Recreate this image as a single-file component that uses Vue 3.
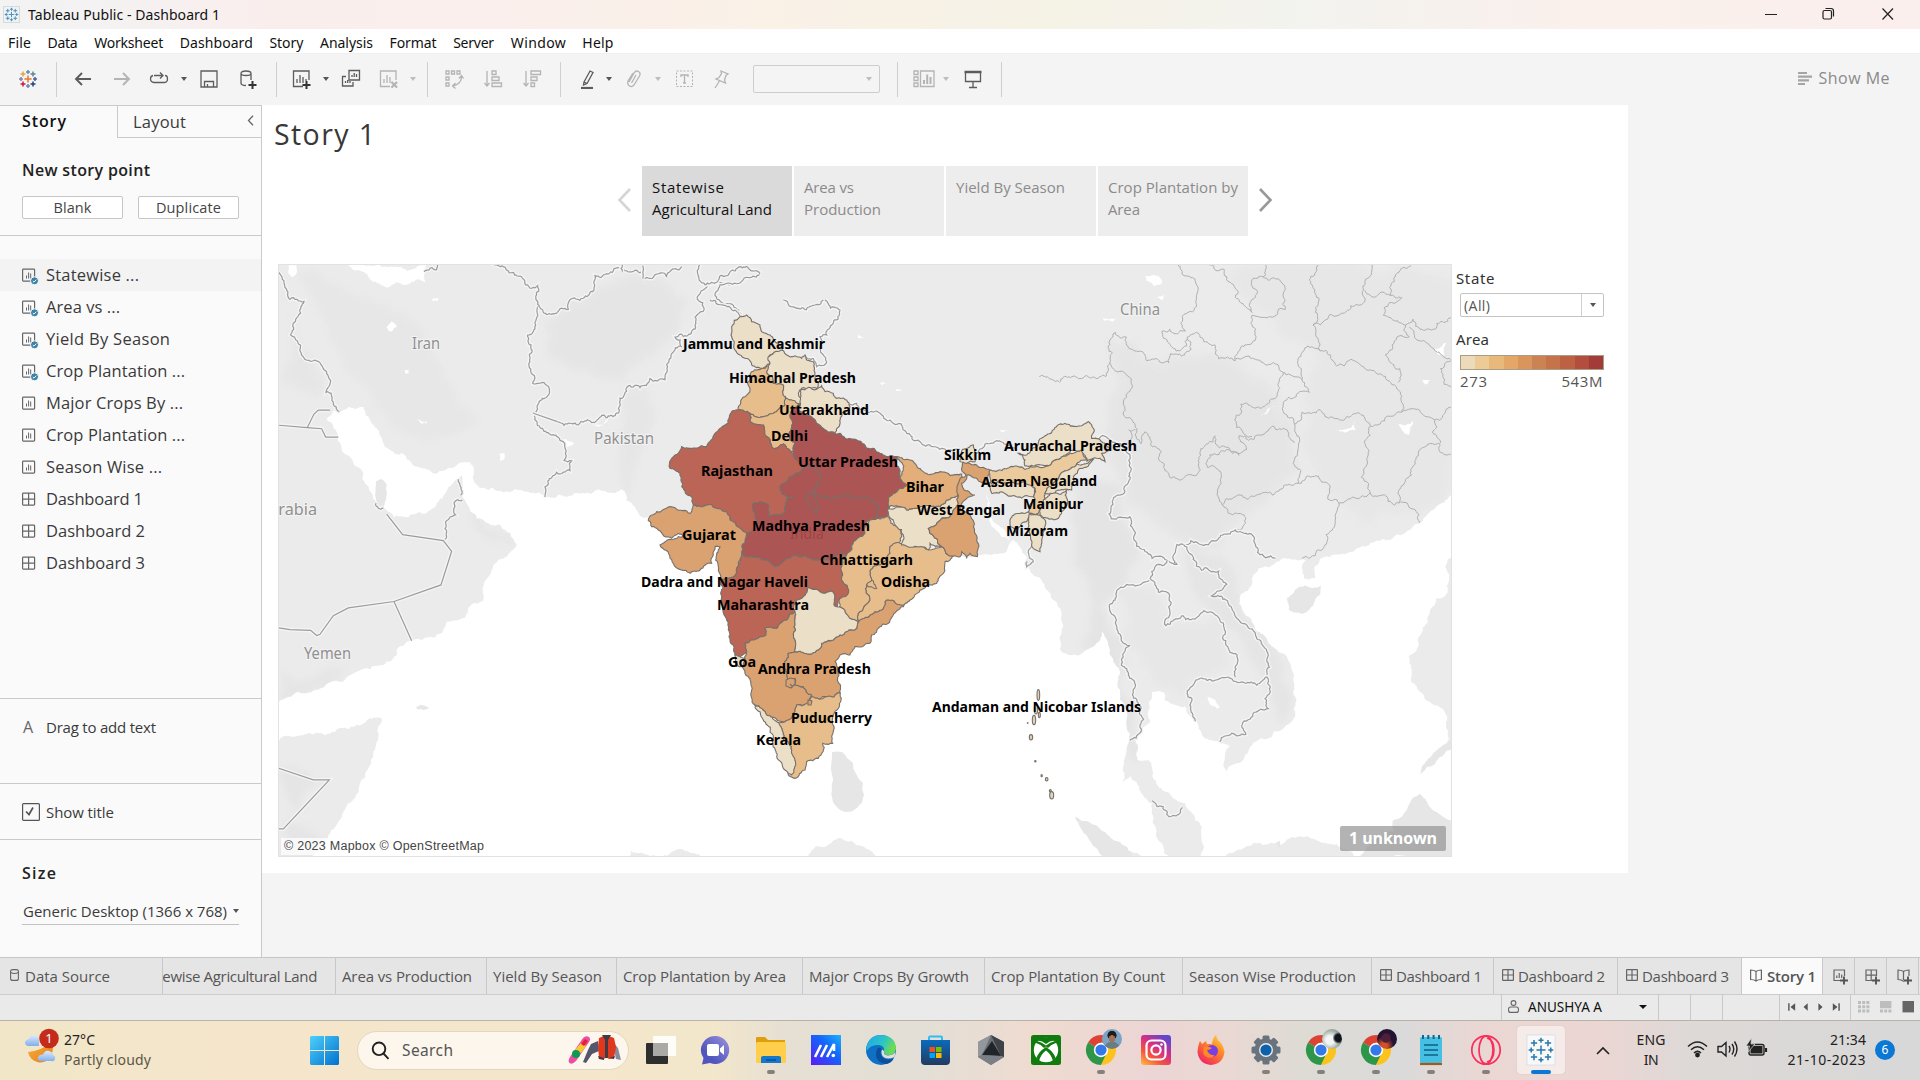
<script setup>
// Stretches or tightens letter spacing so a label takes a given width.
const vFit = {
  mounted(el, { value }) {
    const n = el.textContent.length
    const w = el.getBoundingClientRect().width
    el.style.letterSpacing = ((value - w) / Math.max(1, n - 1)).toFixed(3) + 'px'
  },
}

const menus = [
  ['File', 8, 23], ['Data', 48, 30], ['Worksheet', 95, 69], ['Dashboard', 180, 73], ['Story', 269, 34],
  ['Analysis', 319, 53], ['Format', 388, 47], ['Server', 451, 41], ['Window', 508, 55], ['Help', 580, 31],
]

// name, horizontal centre, width
const toolSpec = [
  ['logo', 27.5, 20], ['sep', 56.5, 1], ['back', 83, 20], ['fwd', 122, 20], ['redo', 159, 20], ['caret', 183.5, 8],
  ['save', 209, 20], ['db', 248, 20], ['sep', 276.5, 1], ['sheet', 301.5, 20], ['caret', 325.5, 8], ['dup', 350.5, 20],
  ['clear', 389, 20], ['caretoff', 412.5, 8], ['sep', 427.5, 1], ['swap', 453.5, 20], ['asc', 493, 20], ['desc', 532, 20],
  ['sep', 560.5, 1], ['pen', 587, 20], ['caret', 608.5, 8], ['clip', 633.5, 20], ['caretoff', 657.5, 8], ['text', 685, 20],
  ['pin', 721, 20], ['select', 816.5, 127], ['sep', 897.5, 1], ['cards', 924, 22], ['caretoff', 945.5, 8],
  ['present', 973, 20], ['sep', 1001.5, 1],
]
let edge = 0
const tools = toolSpec.map(([name, c, w]) => {
  const left = c - w / 2
  const t = { name, w, gap: left - edge }
  edge = left + w
  return t
})

const glyphs = {
  back: 'M18 10H3M9 4L3 10L9 16', fwd: 'M2 10H17M11 4L17 10L11 16',
  redo: 'M4 6.5Q1.5 7 1.5 10T5 13.5H15Q18.5 13.5 18.5 10T16 6.5M5 6.5H14M11 3.5L14 6.5L11 9.5',
  save: 'M2 2H18V18H2ZM5.5 18V12.5H14.5V18M8.5 18V15',
  db: 'M3 4.5Q3 2 8 2T13 4.5Q13 6.5 8 6.5T3 4.5ZM3 4.500V14Q3 16.500 8 16.500M13 4.500V11',
  sheet: 'M11 17.500H1.500V2H17V11M5 14V10M8 14V6M11 14V8M14 12V10',
  dup: 'M8 1.500H18.500V11H8ZM5 7.500H1.500V17H12V13M11 8V6M13.200 8V4M15.500 8V5M4.500 14V12M6.700 14V11M9 14V12',
  clear: 'M11 17.500H1.500V2H17V11M5 14V10M8 14V6M11 14V8M12.500 13L18 18.500M18 13L12.500 18.500',
  swap: 'M2 2H5V5H2ZM7.500 2H10.500V5H7.500ZM13 2H16V5H13ZM2 8H5V11H2ZM2 14H5V17H2ZM17.500 7Q18 15 9 17M11.500 14L8.500 17L11.500 19.500M15 9.500L17.500 6.500L19.500 9.500',
  asc: 'M4 2V17M1.500 14L4 17L6.500 14M9 2H13V5.500H9ZM9 8H16V11.500H9ZM9 14H18.500V17.500H9Z',
  desc: 'M4 2V17M1.500 14L4 17L6.500 14M9 2H18.500V5.500H9ZM9 8H15V11.500H9ZM9 14H12.500V17.500H9Z',
  pen: 'M7 13L13 2L16 3.500L10 14.500L6.500 16ZM7 13L10 14.500',
  clip: 'M5 13L10 4Q12 1 14.500 2.500T15.500 7L10 16Q8 18.500 5.500 17T4 12L9 4M7.500 14L12 6',
  pin: 'M10 2L17 5L15 6.500L13.500 11L14.500 14L5 10L8 8.500L10.500 4.500ZM8.500 12L4 19',
  cards: 'M1 2H5V5.500H1ZM1 8H5V11.500H1ZM1 14H5V17.500H1ZM7.500 2H21V17.500H7.500Z',
  present: 'M2.500 3V12.500H17.500V3M10 12.500V18M6 18.500H14',
}
const dim = ['fwd', 'clear', 'swap', 'asc', 'desc', 'clip', 'pin', 'cards']

const points = [
  ['Statewise ...', 93, 'done'], ['Area vs ...', 74, 'done'], ['Yield By Season', 124, 'done'],
  ['Crop Plantation ...', 139, 'done'], ['Major Crops By ...', 137, 'sheet'], ['Crop Plantation ...', 139, 'sheet'],
  ['Season Wise ...', 116, 'sheet'], ['Dashboard 1', 97, 'dash'], ['Dashboard 2', 99, 'dash'], ['Dashboard 3', 99, 'dash'],
]
const nav = [
  [['Statewise', 72], ['Agricultural Land', 120]],
  [['Area vs', 50], ['Production', 77]],
  [['Yield By Season', 109]],
  [['Crop Plantation by', 130], ['Area', 32]],
]
const ramp = ['#ecdabb', '#eccb97', '#e9b97c', '#e4a768', '#d9955c', '#cc8353', '#c5734b', '#bd6143', '#b14e3e', '#a33b39']

// label, tab width, text width, icon
const tabs = [
  ['Area vs Production', 151, 130], ['Yield By Season', 130, 109], ['Crop Plantation by Area', 186, 163],
  ['Major Crops By Growth', 182, 160], ['Crop Plantation By Count', 198, 174], ['Season Wise Production', 189, 167],
  ['Dashboard 1', 122, 86, 'dash'], ['Dashboard 2', 124, 87, 'dash'], ['Dashboard 3', 124, 87, 'dash'],
]
const sparks = [
  [10, 10, 3.6], [10, 3, 2], [10, 17, 2], [3, 10, 2], [17, 10, 2], [5, 5, 2.5], [15, 5, 2.5], [5, 15, 2.5], [15, 15, 2.5],
]
const sparkHues = ['#e8762b', '#5f8fad', '#6d87b5', '#7b85b8', '#555f9b', '#e9a13f', '#5b879b', '#c72037', '#1f457e']

/* ---------- map geometry ---------- */
const parse = (s) => s.trim().split(/\s+/).map((p) => p.split(',').map(Number))
const noise = (a, b, c, d) => {
  const v = Math.sin((a + c) * 12.9898 + (b + d) * 78.233) * 43758.5453
  return (v - Math.floor(v)) * 2 - 1
}
// Midpoint displacement; symmetric in its end points so shared borders coincide.
function split(p, q, amp, out) {
  const len = Math.hypot(q[0] - p[0], q[1] - p[1])
  if (len < 7) { out.push(q); return }
  const flip = p[0] > q[0] || (p[0] === q[0] && p[1] > q[1])
  const k = noise(p[0], p[1], q[0], q[1]) * amp * len * (flip ? -1 : 1)
  const m = [(p[0] + q[0]) / 2 - ((q[1] - p[1]) / len) * k, (p[1] + q[1]) / 2 + ((q[0] - p[0]) / len) * k]
  split(p, m, amp, out)
  split(m, q, amp, out)
}
function rough(s, closed, amp = 0.13) {
  const pts = parse(s)
  const out = [pts[0]]
  for (let i = 1; i < pts.length; i++) split(pts[i - 1], pts[i], amp, out)
  if (closed) split(pts[pts.length - 1], pts[0], amp, out)
  return 'M' + out.map((p) => p[0].toFixed(1) + ' ' + p[1].toFixed(1)).join('L') + (closed ? 'Z' : '')
}
const W = 'translate(270 250) scale(.33333 .39541)'
const E = 'translate(1080 250) scale(.3699 .39541)'
const B = 'translate(880 400) scale(.33333)'
const S = 'translate(640 300) scale(.33333)'

const shade = [
  [W, '300,120 420,180 520,300 560,380 640,420 560,460 440,470 360,440 280,340 200,250 150,150 60,60 200,90', '#e6e6e6'],
  [W, '820,180 1000,90 1180,80 1260,130 1200,230 1060,330 900,300 830,260', '#e4e4e4'],
  [W, '580,650 640,700 720,720 735,745 700,740 640,720', '#e4e4e4'],
  [W, '27,1310 130,1340 178,1345 60,1450 175,1500 100,1535 27,1535', '#e3e3e3'],
  [W, '27,1060 140,1080 240,1050 200,1090 140,1108 27,1140', '#e4e4e4'],
  [W, '1050,380 1130,350 1160,420 1110,520 1080,620 1050,560', '#e5e5e5'],
  [W, '27,100 90,250 160,320 150,370 27,330', '#e5e5e5'],
  [E, '60,220 400,280 560,420 600,560 420,700 300,760 120,640 60,480', '#e4e4e4'],
  [E, '400,60 1005,80 1005,600 760,700 600,500 640,260', '#e6e6e6'],
  [E, '0,560 130,600 160,760 120,860 60,900 100,1100 150,1300 100,1200 60,1000 0,1020', '#e2e2e2'],
  [E, '270,760 420,820 430,900 540,1030 575,1140 540,1200 500,1100 420,960 340,900', '#e3e3e3'],
  [E, '110,860 200,860 240,950 380,930 400,1060 300,1080 280,1140 200,1100 130,1000', '#e6e6e6'],
]
const water = [
  [W, '190,405 205,415 240,397 280,397 300,430 330,470 350,500 400,515 430,545 475,555 500,565 520,558 565,540 600,537 612,555 615,590 650,605 720,612 830,625 900,622 960,617 1030,615 1055,605 1070,635 1095,650 1110,672 1160,668 1250,668 1440,665 1440,1568 90,1568 130,1530 175,1480 215,1435 235,1400 270,1350 295,1310 310,1270 325,1240 330,1200 335,1185 310,1182 260,1200 200,1212 130,1225 80,1230 20,1245 20,1145 70,1125 140,1112 175,1095 220,1092 240,1075 300,1060 350,1040 380,1025 385,1005 420,988 470,980 510,970 530,940 585,930 595,905 640,885 642,840 665,810 700,780 720,765 740,745 720,715 690,695 655,690 620,680 600,660 582,630 577,610 577,570 560,580 530,610 500,640 470,665 430,668 370,675 345,655 320,640 300,610 285,590 278,560 250,540 215,505 200,460 170,430 185,415'],
  [W, '230,30 290,60 310,80 360,92 410,88 468,80 465,50 470,30'],
  [W, '52,38 80,38 82,55 66,68 55,58'], [W, '348,195 364,181 380,195 364,206'], [W, '487,124 505,120 505,129 487,129'],
  [W, '687,515 704,515 703,530 690,534'], [W, '404,303 416,302 416,312 406,314'], [W, '880,478 912,488 890,498'], [W, '970,442 1015,428 990,446'], [W, '440,428 470,434 470,440'],
  [B, '-390,600 190,490 250,470 300,465 350,462 380,455 400,420 420,440 440,470 440,500 470,530 500,570 520,600 545,640 550,680 540,720 540,745 570,765 600,765 640,740 665,695 680,720 700,780 715,840 720,870 735,920 740,980 745,1030 735,1070 730,1140 730,1400 -400,1400'],
  [E, '118,1345 135,1330 160,1365 195,1400 205,1460 220,1500 245,1545 -20,1545 -20,1300'],
  [E, '1010,620 960,655 920,690 870,720 800,735 770,750 700,770 650,780 635,800 635,830 605,830 600,800 610,785 570,782 530,790 500,800 470,820 465,845 435,870 430,895 460,930 480,965 510,995 545,1020 570,1050 580,1100 585,1140 578,1185 550,1210 510,1235 470,1245 455,1270 420,1300 395,1318 392,1280 405,1255 375,1245 350,1240 320,1210 300,1180 285,1155 230,1140 225,1118 195,1118 187,1150 190,1190 170,1210 150,1240 155,1290 185,1290 195,1330 215,1360 260,1390 300,1420 330,1460 335,1510 330,1568 1010,1568'],
  [E, '175,65 215,68 222,82 200,92 180,78'], [E, '208,120 228,110 222,128'], [E, '62,172 98,172 90,181 64,178'],
  [E, '692,455 735,448 742,432 745,455 715,462'], [E, '862,440 900,432 888,468 870,455'], [E, '925,330 948,330 935,340'],
  [E, '958,248 990,235 985,265 965,262'], [E, '345,1130 378,1155 370,1160 348,1142'], [E, '488,418 530,392 505,414'],
  [S, '655,105 672,112 655,115'], [S, '720,248 740,250 725,255'], [S, '768,268 788,270 770,274'],
  [B, '355,85 385,92 365,96'], [B, '318,280 332,370 400,440 360,380 326,340'],
]
const isles = [
  [W, '318,585 332,580 348,590 350,620 340,650 325,645 315,620'], [W, '438,1155 460,1152 482,1158 460,1164 442,1162'],
  ['', '832,752 842,752 853,763 863,783 864,795 857,808 845,812 835,805 832,790 831,770'],
  [E, '558,880 580,860 610,848 652,850 650,870 630,900 600,920 565,910'],
  [E, '745,1540 790,1490 850,1470 845,1445 880,1420 900,1385 920,1375 940,1400 960,1420 985,1435 1010,1445 1010,1545'],
  [E, '920,1325 925,1305 950,1280 1010,1240 1010,1260 960,1300'],
  [E, '-14,1432 20,1445 60,1470 90,1492 125,1508 142,1545 72,1545 40,1510 10,1475'],
  [E, '530,1498 540,1494 543,1508 535,1513'],
]
const borders = [
  [W, '24,55 45,95 60,125 102,130 92,160 70,185 62,215 90,255 130,280 155,292 175,320 168,360 183,362 190,385 208,408'],
  [W, '665,36 700,42 740,65 767,88 803,90 808,142 797,190 773,215 783,240 778,265 788,337 832,343 832,370 790,413'],
  [W, '862,434 945,432 1047,410 1050,375 1070,348 1110,348 1140,325 1185,328 1190,290 1205,262 1235,245 1215,220 1250,218 1275,200 1275,170 1300,155 1282,118 1305,98 1350,82 1400,85 1440,70 1470,55'],
  [W, '790,413 830,462 880,485 882,532 905,533 900,558 860,562 838,578 825,625'],
  [W, '808,142 860,160 895,150 897,130 940,122 968,105 975,65 1010,60 1040,45 1080,55 1120,55 1125,72 1165,60 1190,68 1235,42'],
  [W, '1290,36 1292,80 1320,85 1380,55 1440,50 1470,60'], [W, '1400,85 1350,88 1340,125 1390,140 1415,170'],
  [W, '462,55 500,50 505,36'], [W, '1118,72 1118,40'], [W, '1057,38 1057,55'],
  [W, '520,735 525,705 540,675 557,670 552,640 577,632'], [W, '565,580 573,600 572,620'], [W, '318,640 325,653 340,653'],
  [S, '210,0 260,20 300,48'], [S, '430,0 470,25 525,15 550,0'], [S, '555,0 600,30 575,75 560,105 540,110 540,145 560,185 530,200 495,168'],
  [S, '625,315 650,310 720,340 760,370 785,375 800,400 840,425 880,440 960,448'],
  [B, '290,160 320,130 350,122 380,132 410,150'], [B, '460,420 460,485 440,500 442,485'],
  [E, '40,475 80,480 110,490 125,510 135,540 130,590 90,630 85,680 135,675 150,715 163,755 195,780 235,785 262,795 262,745 300,735 360,735 420,708 470,725 480,765 528,780'],
  [E, '235,785 190,830 150,850 105,857 95,885 80,910 100,955 135,1000 112,1050 150,1100 165,1160 172,1187 135,1240'],
  [E, '190,830 212,865 240,868 243,915 232,950 275,925 300,935 335,912 375,930 390,960 395,1000 425,1025 420,1080'],
  [E, '280,745 305,775 315,800 375,812 397,845 355,875 410,905 440,945 480,985 505,1015 512,1055 505,1080'],
  [E, '312,1192 300,1165 290,1115 325,1083 400,1080 445,1095 505,1080 512,1110 510,1160 440,1195 448,1225 410,1222 378,1243'],
  [E, '195,1393 225,1408 240,1433 270,1425 277,1410'],
]
const straight = [
  'M24 443L112 449L155 452L167 473H205', 'M112 449L132 415L145 405L180 405',
  'M350 668L398 720L520 735L545 762L513 847L372 889L235 905L190 925L150 972L140 975L122 962L60 960L24 955',
  'M372 889L425 988', 'M24 1310L130 1340H178L40 1464H24', 'M790 413L862 434',
]
const provinces = [
  '265,38 300,70 315,115 272,185 285,205 260,212 222,205 240,235 270,255 290,220 315,208 335,232 365,240 375,275 420,280 435,245 465,235 465,165 520,170 555,150 555,100 495,68 468,72 480,105 462,130 465,158 420,120 410,85 350,38',
  '495,68 502,38', '-110,320 0,325 70,320 78,290 80,230 95,208 125,220 135,250 180,280 240,285 245,262 300,252 290,225',
  '80,285 120,310 140,350 150,470 165,490 175,460 220,510 270,582 315,570 325,510 365,470 378,500 450,505 430,470 480,468 520,445 560,455 580,488',
  '130,500 132,455 150,455', '420,275 470,275 510,290 550,310 540,350 490,400 435,390 418,430 440,460 465,472',
  '550,310 600,328 620,360 550,385 555,415 580,440 580,530 590,590', '600,328 600,260 650,255 630,190 635,100 645,38',
  '650,255 690,290 770,300 840,335 870,370 870,410 830,420 785,445 770,425 720,422 650,405 600,410 580,440',
  '630,190 700,165 770,130 770,80 790,38', '770,102 840,115 850,80 895,40', '840,115 870,120 820,165 880,190 900,175 960,200 1005,170',
  '880,190 890,220 850,230 825,265 865,300 860,335', '890,195 950,245 1005,280',
  '785,445 775,530 785,615 700,640 670,630 670,590 645,572 590,590 520,620 450,630 385,645 375,600 380,560 345,550 345,530 430,520',
  '700,640 690,690 665,720 640,760 600,780', '385,645 400,665 448,680 420,708', '785,615 850,645 862,640 900,655 918,690',
  '862,640 880,580 915,520 970,488 1005,520', '870,410 920,410 960,430 975,488', '960,430 1005,400', '1005,280 975,300 985,340 1005,350',
]
const c = { a: '#ecdfc8', b: '#ebcb9d', c: '#e6bd8b', d: '#e3ae79', e: '#daa270', f: '#bb6557', g: '#ab5654' }
// Solid backing, so no base map shows through between neighbouring states.
const backing = [
  [c.g, '470,520 700,500 700,660 470,680'],
  [c.c, '650,760 740,700 770,760 770,860 720,900 670,925 640,880'],
]
const states = [
  [c.c, '375,205 390,195 380,215 400,250 430,255 430,285 440,290 435,315 410,335 365,350 330,340 295,330 315,290 330,270 330,225 365,205'],
  [c.a, '275,80 300,50 320,45 335,65 360,75 365,95 390,105 400,120 420,135 430,155 400,160 385,175 390,190 365,205 335,195 328,180 300,165 285,150 283,125 273,105'],
  [c.a, '385,170 400,160 430,152 455,170 485,175 495,165 500,180 520,185 525,220 535,250 530,265 485,265 475,280 480,310 455,300 430,285 430,255 400,250 380,215 390,190'],
  [c.c, '330,340 365,350 410,335 435,315 435,288 455,300 480,315 450,345 450,420 465,430 460,455 440,445 430,432 400,445 390,420 375,405 370,375 330,365'],
  [c.f, '295,330 330,340 330,365 370,375 375,405 390,420 400,445 430,432 440,445 460,460 480,490 500,500 450,530 420,560 425,580 460,590 440,600 435,635 405,645 385,650 350,660 340,690 320,700 300,685 270,660 260,635 230,625 200,615 160,615 155,590 125,560 120,520 90,505 92,480 125,440 145,445 200,440 225,400 265,370 275,335'],
  [c.g, '480,315 455,330 450,345 450,420 465,430 460,460 480,490 500,500 530,510 542,530 530,560 520,580 560,590 600,590 650,595 700,605 718,625 712,655 740,655 745,640 745,595 775,570 800,555 780,535 775,500 770,470 740,470 720,460 680,445 650,420 600,400 585,400 550,385 530,370 500,345'],
  [c.a, '480,270 505,262 530,268 545,257 555,275 580,280 590,295 620,300 630,320 605,340 600,370 585,400 550,385 530,370 500,345 475,325 480,305'],
  [c.g, '500,500 530,510 542,530 525,575 500,585 505,610 530,640 532,610 520,580 560,590 600,590 650,595 700,605 718,625 712,655 680,665 675,700 640,725 620,765 570,780 530,780 500,770 460,765 430,785 405,800 390,785 320,770 305,755 315,720 320,700 340,690 350,660 345,640 340,610 360,605 385,615 385,650 405,645 435,635 440,600 460,590 425,580 420,560 450,530'],
  [c.e, '25,662 50,635 140,633 150,640 160,615 200,615 230,625 260,635 270,660 300,685 320,700 315,720 305,755 320,770 295,790 290,820 265,835 240,840 235,800 230,760 240,740 225,740 220,765 215,790 180,810 150,820 125,810 90,775 60,735 75,725 130,710 115,700 95,715 55,690 35,680'],
  [c.f, '305,760 320,770 390,785 405,800 430,785 460,765 500,770 530,780 570,780 620,765 605,800 605,840 625,880 600,895 592,920 582,915 578,875 545,878 505,862 490,890 470,900 465,935 440,960 410,985 375,985 378,1005 315,1030 320,1055 300,1070 285,1065 270,1020 260,960 245,890 240,840 265,835 290,820 295,790'],
  [c.e, '465,935 465,970 465,1055 445,1060 445,1140 465,1155 490,1160 515,1185 510,1210 470,1215 465,1235 435,1265 380,1245 345,1215 335,1170 315,1120 305,1095 320,1055 315,1030 378,1005 375,985 410,985 440,960'],
  [c.a, '285,1065 300,1070 315,1075 310,1100 298,1100'],
  [c.e, '810,900 785,915 755,900 735,905 725,930 705,935 690,945 655,965 650,985 600,1005 580,1020 545,1030 540,1045 495,1060 465,1055 445,1060 445,1140 465,1135 465,1155 490,1160 515,1185 515,1200 560,1190 600,1178 592,1140 585,1085 600,1065 630,1065 645,1040 690,1030 695,1005 745,970 790,920'],
  [c.a, '505,862 545,878 578,875 582,915 600,920 630,955 655,965 650,985 600,1005 580,1020 545,1030 540,1045 495,1060 465,1055 465,970 465,935 470,900 490,890'],
  [c.c, '600,1178 598,1210 578,1250 578,1330 548,1330 535,1375 500,1385 495,1410 465,1435 445,1425 455,1395 455,1350 430,1320 425,1285 405,1265 435,1265 465,1235 470,1215 500,1210 515,1190 560,1190'],
  [c.a, '345,1215 380,1245 410,1265 425,1285 430,1320 455,1350 460,1370 455,1425 435,1410 410,1370 400,1310 370,1260'],
  [c.c, '745,650 770,680 785,710 780,725 750,740 750,760 720,795 700,800 695,840 680,855 690,900 660,935 655,965 630,955 600,920 600,895 625,880 605,840 605,800 620,765 640,725 675,700 690,660 712,655'],
  [c.c, '750,740 780,730 825,740 870,750 905,740 940,768 915,785 910,820 890,850 840,870 810,900 785,915 755,900 735,905 725,930 705,935 690,945 655,965 660,935 690,900 680,855 710,865 695,840 700,800 720,795 750,760'],
  [c.a, '745,625 780,620 800,630 840,620 900,620 920,600 955,585 955,610 930,650 890,670 865,685 870,700 905,740 870,730 865,750 830,740 785,735 790,705 770,680 745,640'],
  [c.d, '770,470 810,480 850,515 900,515 965,522 965,550 955,585 920,600 900,620 840,620 800,630 780,620 745,620 745,595 775,570 800,555 780,535 790,510'],
  [c.e, '970,485 1010,495 1050,510 1045,550 1010,535 980,525 965,550 970,565 1005,585 975,600 962,630 990,645 1000,680 1010,720 1012,770 990,760 980,775 965,755 960,770 940,768 905,740 870,700 865,685 890,670 930,650 955,610 955,585 955,550 978,525 965,505'],
  [c.a, '960,485 968,448 1000,435 1008,460 1005,485 980,490'],
  [c.b, '1050,510 1120,500 1190,498 1230,495 1265,470 1300,460 1325,450 1340,480 1310,492 1270,515 1240,550 1215,580 1210,610 1195,640 1165,640 1185,600 1185,565 1150,555 1100,565 1050,550'],
  [c.a, '1045,550 1100,548 1150,545 1185,565 1180,590 1110,588 1055,580'],
  [c.a, '1135,460 1160,465 1190,440 1220,405 1275,370 1310,380 1345,365 1362,395 1355,415 1385,425 1410,450 1385,460 1395,485 1380,475 1360,475 1340,485 1325,450 1265,470 1230,495 1155,498 1155,480'],
  [c.a, '1215,580 1240,550 1270,515 1310,492 1360,478 1320,505 1300,530 1295,570 1255,570 1230,585'],
  [c.a, '1230,580 1280,570 1282,600 1265,635 1255,655 1200,645 1210,600'],
  [c.a, '1165,640 1200,645 1215,660 1215,690 1205,720 1200,755 1180,745 1170,700 1165,670'],
  [c.a, '1165,635 1160,665 1145,670 1130,700 1112,680 1112,655 1140,640'],
]
const dots = [[475, 885, 4, 16], [468, 928, 5, 14], [462, 960, 5, 14], [478, 945, 3, 8], [453, 1012, 5, 8], [466, 1084, 2, 2], [485, 1127, 2, 3], [500, 1138, 4, 5], [443, 969, 1, 1], [515, 1186, 6, 11], [511, 1172, 3, 3]]

// text, left, baseline, width
const labels = [
  ['Jammu and Kashmir', 683, 349, 142], ['Himachal Pradesh', 729, 383, 127], ['Uttarakhand', 779, 415, 90],
  ['Delhi', 771, 441, 37], ['Rajasthan', 701, 476, 72], ['Uttar Pradesh', 798, 467, 100], ['Madhya Pradesh', 752, 531, 118],
  ['Gujarat', 682, 540, 54], ['Bihar', 906, 492, 38], ['Sikkim', 944, 460, 47], ['Arunachal Pradesh', 1004, 451, 133],
  ['Assam', 981, 487, 46], ['Nagaland', 1030, 486, 67], ['Manipur', 1023, 509, 60], ['West Bengal', 917, 515, 88],
  ['Mizoram', 1006, 536, 62], ['Chhattisgarh', 820, 565, 93], ['Odisha', 881, 587, 49], ['Dadra and Nagar Haveli', 641, 587, 167],
  ['Maharashtra', 717, 610, 92], ['Goa', 728, 667, 28], ['Andhra Pradesh', 758, 674, 113], ['Puducherry', 791, 723, 81],
  ['Kerala', 756, 745, 45], ['Andaman and Nicobar Islands', 932, 712, 209],
]
const countries = [['Iran', 412, 349, 28], ['Pakistan', 594, 444, 60], ['Arabia', 268, 515, 49], ['Yemen', 304, 659, 47], ['China', 1120, 315, 40]]

// icon, centre
const apps = [
  ['view', 661], ['chat', 715], ['files', 771], ['ma', 826], ['edge', 881], ['store', 935], ['armoury', 991], ['xbox', 1046],
  ['chrome', 1101, 'p1'], ['insta', 1156], ['firefox', 1211], ['gear', 1266], ['chrome', 1321, 'p2'], ['chrome', 1376, 'p3'],
  ['note', 1431], ['opera', 1486], ['tableau', 1541],
]
const running = [771, 1101, 1266, 1321, 1376, 1431, 1486]
let last = 629
const dock = apps.map(([name, x, pic]) => {
  const w = name === 'tableau' ? 48 : 36
  const gap = x - w / 2 - last
  last = x + w / 2
  return { name, pic, w, gap, dot: running.includes(x) }
})
</script>

<template>
  <div class="screen">
    <header class="title">
      <svg class="appicon" viewBox="0 0 20 20"><path v-for="(s, i) in sparks" :key="i" :d="`M${s[0] - s[2]} ${s[1]}h${s[2] * 2}M${s[0]} ${s[1] - s[2]}v${s[2] * 2}`" stroke="#4c8fb8" stroke-width="1.3" /></svg>
      <span v-fit="192" class="t">Tableau Public - Dashboard 1</span>
      <svg class="winctl" viewBox="0 0 150 28" fill="none" stroke="#222" stroke-width="1.2">
        <path d="M21 14.500H33M138.500 8.500L149 19.500M149 8.500L138.500 19.500" />
        <rect x="79" y="10.500" width="8.500" height="8.500" rx="1.500" /><path d="M81.500 8.500H87Q89.500 8.500 89.500 11V16.500" />
      </svg>
    </header>
    <nav class="menu">
      <span v-for="m in menus" :key="m[0]" class="mi" :style="{ width: m[2] + 'px' }"><span v-fit="m[2]" class="t">{{ m[0] }}</span></span>
    </nav>

    <div class="toolbar">
      <div v-for="(t, i) in tools" :key="i" class="tool" :style="{ width: t.w + 'px', marginLeft: t.gap + 'px' }">
        <i v-if="t.name === 'sep'" class="vsep"></i>
        <i v-else-if="t.name.startsWith('caret')" class="caret" :class="{ off: t.name === 'caretoff' }"></i>
        <div v-else-if="t.name === 'select'" class="tselect"><i class="caret off"></i></div>
        <svg v-else-if="t.name === 'logo'" width="20" height="20" viewBox="0 0 20 20">
          <path v-for="(s, k) in sparks" :key="k" :d="`M${s[0] - s[2]} ${s[1]}h${s[2] * 2}M${s[0]} ${s[1] - s[2]}v${s[2] * 2}`" :stroke="sparkHues[k]" stroke-width="1.5" />
        </svg>
        <svg v-else-if="t.name === 'text'" width="20" height="20" viewBox="0 0 20 20" fill="none" stroke="#b4b4b4">
          <rect x="1.500" y="2" width="16" height="15.500" stroke-dasharray="2 1.500" /><path d="M6 8V6H13V8M9.500 6V14M8 14H11" stroke-width="1.300" />
        </svg>
        <svg v-else :width="t.w" height="20" :viewBox="`0 0 ${t.w} 20`" fill="none" :stroke="dim.includes(t.name) ? '#b4b4b4' : '#5c5c5c'" :stroke-width="['back', 'fwd'].includes(t.name) ? 1.9 : 1.3">
          <path :d="glyphs[t.name]" />
          <path v-if="t.name === 'db' || t.name === 'sheet'" d="M14.500 12V20M10.500 16H18.500" stroke="#333" stroke-width="2" />
          <path v-if="t.name === 'pen'" d="M4 19H16" stroke-width="2.200" />
          <path v-if="t.name === 'clear'" d="M12.500 13L18 18.500M18 13L12.500 18.500" stroke-width="2" />
          <path v-if="t.name === 'present'" d="M1.500 3H18.500" stroke-width="2.500" />
          <path v-if="t.name === 'cards'" d="M11 15V11M14.200 15V5.500M17.500 15V8" stroke-width="2" />
        </svg>
      </div>
      <div class="showme">
        <svg width="15" height="15" viewBox="0 0 15 15"><path d="M0 2H9M0 5.700H14M0 9.400H11M0 13H7" stroke="#a5a5a5" stroke-width="2.200" /></svg>
        <span v-fit="71" class="t">Show Me</span>
      </div>
    </div>

    <div class="work">
      <aside class="side">
        <div class="stabs">
          <div class="stab on"><b v-fit="44" class="t">Story</b></div>
          <div class="stab lay"><span v-fit="53" class="t">Layout</span><svg width="7" height="11" viewBox="0 0 7 11"><path d="M6 .8L1.500 5.500L6 10.200" fill="none" stroke="#666" stroke-width="1.300" /></svg></div>
        </div>
        <div class="newpt">
          <b v-fit="128" class="t">New story point</b>
          <div class="btns"><button><span v-fit="38" class="t">Blank</span></button><button><span v-fit="65" class="t">Duplicate</span></button></div>
        </div>
        <ul class="list">
          <li v-for="(p, i) in points" :key="i" :class="{ hot: i === 0 }">
            <svg width="17" height="17" viewBox="0 0 17 17" fill="none" stroke="#666">
              <rect x=".6" y="1.100" width="12" height="12" rx=".8" stroke-width="1.200" />
              <path v-if="p[2] === 'dash'" d="M6.600 1V13M.6 7.100H12.600" stroke-width="1.200" />
              <path v-else d="M4.500 10.500V7.500M6.600 10.500V4.500M8.700 10.500V5.500" />
              <g v-if="p[2] === 'done'"><circle cx="12.500" cy="12.800" r="4" fill="#3a81a3" stroke="#fafafa" /><path d="M10.800 13L12 14.200L14.300 11.600" stroke="#fff" /></g>
            </svg>
            <span v-fit="p[1]" class="t">{{ p[0] }}</span>
          </li>
        </ul>
        <div class="drag"><span class="aglyph">A</span><span v-fit="110" class="t">Drag to add text</span></div>
        <div class="show"><svg width="18" height="18" viewBox="0 0 18 18" fill="none" stroke="#555"><rect x=".6" y=".6" width="16.800" height="16.800" rx="1" stroke-width="1.200" /><path d="M4 8.500L7 11.500L11 4.500" stroke-width="1.700" /></svg><span v-fit="68" class="t">Show title</span></div>
        <div class="size">
          <b v-fit="34" class="t">Size</b>
          <div class="gen"><span v-fit="204" class="t">Generic Desktop (1366 x 768)</span><i class="caret"></i></div>
        </div>
      </aside>

      <main class="canvas">
        <h1><span v-fit="101" class="t">Story 1</span></h1>
        <div class="nav">
          <svg width="15" height="26" viewBox="0 0 15 26"><path d="M13 2L2.500 13L13 24" fill="none" stroke="#d6d6d6" stroke-width="2.600" /></svg>
          <div class="pts">
            <div v-for="(n, i) in nav" :key="i" class="pt" :class="{ on: i === 0 }">
              <div v-for="l in n" :key="l[0]"><span v-fit="l[1]" class="t">{{ l[0] }}</span></div>
            </div>
          </div>
          <svg width="15" height="26" viewBox="0 0 15 26"><path d="M2 2L12.500 13L2 24" fill="none" stroke="#999" stroke-width="2.600" /></svg>
        </div>
        <div class="body">
          <div class="map">
            <svg width="1172" height="591" viewBox="279 265 1172 591">
              <rect x="270" y="250" width="1200" height="620" fill="#ebebeb" />
              <g v-for="(s, i) in shade" :key="'s' + i" :transform="s[0]"><path :d="rough(s[1], true, 0.2)" :fill="s[2]" class="soft" /></g>
              <g v-for="(w, i) in water" :key="'w' + i" :transform="w[0]"><path :d="rough(w[1], true, 0.17)" fill="#fff" /></g>
              <g v-for="(w, i) in isles" :key="'i' + i" :transform="w[0]"><path :d="rough(w[1], true)" fill="#e6e6e6" /></g>
              <g :transform="E"><path v-for="(p, i) in provinces" :key="i" :d="rough(p, false, 0.26)" class="prov" /></g>
              <g v-for="(b, i) in borders" :key="'b' + i" :transform="b[0]"><path :d="rough(b[1], false, 0.24)" class="halo" /><path :d="rough(b[1], false, 0.24)" class="line" /></g>
              <g :transform="W"><path v-for="(p, i) in straight" :key="i" :d="p" class="halo" /><path v-for="(p, i) in straight" :key="'l' + i" :d="p" class="line" /></g>
              <text v-for="l in countries" :key="l[0]" :x="l[1]" :y="l[2]" :textLength="l[3]" lengthAdjust="spacingAndGlyphs" class="country">{{ l[0] }}</text>
              <g :transform="S">
                <path v-for="(s, i) in backing" :key="'k' + i" :d="rough(s[1], true, 0)" :fill="s[0]" />
                <path v-for="(s, i) in states" :key="i" :d="rough(s[1], true, 0.18)" :fill="s[0]" class="state" />
              </g>
              <g :transform="B"><ellipse v-for="(d, i) in dots" :key="i" :cx="d[0]" :cy="d[1]" :rx="d[2]" :ry="d[3]" fill="#e0d4be" class="state" /></g>
              <path d="M786 680l4-2 5 1 0 5-4 4-5-2zM790 684l3 3M808 700l4 1-1 4-3 0z" fill="#daa270" class="state" />
              <text x="790" y="539" textLength="34" lengthAdjust="spacingAndGlyphs" class="india">India</text>
              <text v-for="l in labels" :key="l[0]" :x="l[1]" :y="l[2]" :textLength="l[3]" lengthAdjust="spacingAndGlyphs" class="lab">{{ l[0] }}</text>
            </svg>
            <div class="attr"><span v-fit="200" class="t">© 2023 Mapbox © OpenStreetMap</span></div>
            <div class="unknown"><b v-fit="88" class="t">1 unknown</b></div>
          </div>
          <div class="legend">
            <div class="lh"><span v-fit="38.500" class="t">State</span></div>
            <div class="lsel"><span v-fit="26" class="t">(All)</span><em><i class="caret"></i></em></div>
            <div class="lh area"><span v-fit="33" class="t">Area</span></div>
            <div class="ramp"><i v-for="r in ramp" :key="r" :style="{ background: r }"></i></div>
            <div class="lims"><span v-fit="27" class="t">273</span><span v-fit="41" class="t">543M</span></div>
          </div>
        </div>
      </main>
    </div>

    <div class="tabs">
      <div class="tab ds"><svg width="9" height="12" viewBox="0 0 9 12" fill="none" stroke="#666" stroke-width="1.100"><rect x=".6" y=".6" width="7.800" height="10.800" rx="2" /><path d="M.6 3.500Q4.500 5.500 8.400 3.500" /></svg><span v-fit="85" class="t">Data Source</span></div>
      <div class="tab cut"><span v-fit="181" class="t">Statewise Agricultural Land</span></div>
      <div v-for="t in tabs" :key="t[0]" class="tab" :class="{ withicon: t[3] }" :style="{ width: t[1] + 'px' }">
        <svg v-if="t[3]" width="12" height="12" viewBox="0 0 12 12" fill="none" stroke="#666" stroke-width="1.200"><rect x=".6" y=".6" width="10.800" height="10.800" rx=".6" /><path d="M6 .6V11.400M.6 6H11.400" /></svg>
        <span v-fit="t[2]" class="t">{{ t[0] }}</span>
      </div>
      <div class="tab act"><svg width="12" height="13" viewBox="0 0 12 13" fill="none" stroke="#666" stroke-width="1.200"><path d="M6 2.500Q4 1 .6 1V10.500Q4 10.500 6 12Q8 10.500 11.400 10.500V1Q8 1 6 2.500V12" /></svg><b v-fit="49" class="t">Story 1</b></div>
      <div v-for="k in 3" :key="k" class="tab add">
        <svg width="16" height="16" viewBox="0 0 16 16" fill="none" stroke="#666" stroke-width="1.200">
          <path v-if="k === 1" d="M7.500 11.500H1V1H11.500V7M3.800 9V6.500M6.200 9V4M8.700 9V5.500" />
          <path v-else-if="k === 2" d="M7.500 11.500H1V1H11.500V7M6.200 1V11.500M1 6.200H11.500" />
          <path v-else d="M7 12.500Q4.500 10.500 1 10.500V1Q4.500 1 6.500 2.500Q8.500 1 12 1V7M6.500 2.500V11" />
          <path d="M11 7.500V15.500M7 11.500H15" stroke="#555" stroke-width="1.900" />
        </svg>
      </div>
    </div>

    <div class="status">
      <div class="user">
        <svg width="11" height="13" viewBox="0 0 11 13" fill="none" stroke="#666" stroke-width="1.100"><circle cx="5.500" cy="3" r="2.400" /><rect x=".6" y="7" width="9.800" height="5.400" rx="2" /></svg>
        <span v-fit="74" class="t">ANUSHYA A</span><i class="caret big"></i>
      </div>
      <div class="c32"></div><div class="c32"></div><div class="c57"></div>
      <div class="pager"><svg width="71" height="12" viewBox="0 0 71 12" fill="#555"><path d="M7 6L12 2V10ZM4.500 2H6V10H4.500ZM21 6L25.500 2V10ZM41.500 6L37 2V10ZM57.500 6L52.500 2V10ZM58.500 2H60V10H58.500Z" /></svg></div>
      <div class="views"><svg width="58" height="12" viewBox="0 0 58 12"><path d="M0 0H3V3H0ZM4.200 0H7.200V3H4.200ZM8.400 0H11.400V3H8.400ZM0 4.200H3V7.200H0ZM4.200 4.200H7.200V7.200H4.200ZM8.400 4.200H11.400V7.200H8.400ZM0 8.400H3V11.400H0ZM4.200 8.400H7.200V11.400H4.200ZM8.400 8.400H11.400V11.400H8.400ZM22 0H33.400V7.200H22ZM22 8.400H25V11.400H22ZM26.200 8.400H29.200V11.400H26.200ZM30.400 8.400H33.400V11.400H30.400Z" fill="#bdbdbd" /><path d="M44.500 0H56V11.400H44.500Z" fill="#666" /></svg></div>
    </div>

    <footer class="taskbar">
      <svg class="weather" width="42" height="40" viewBox="0 0 42 40">
        <defs>
          <linearGradient id="cl" x1="0" y1="0" x2="0" y2="1"><stop offset="0" stop-color="#dcebff" /><stop offset="1" stop-color="#82aeea" /></linearGradient>
          <linearGradient id="mo" x1="0" y1="0" x2="1" y2="1"><stop offset="0" stop-color="#f7b23a" /><stop offset="1" stop-color="#e87a1a" /></linearGradient>
        </defs>
        <path d="M4 20Q1 19 1 16.500T5 13Q6 9 10 9T15 13V20Z" fill="url(#cl)" />
        <path d="M4 26Q20 24 26 16Q31 22 27 30Q23 37 15 36.500Q6 35 4 26Z" fill="url(#mo)" />
        <path d="M16 35Q13 34 14 31T19 28.500Q21 24 25 25T29 29Q32 30 31 33T28 35Z" fill="url(#cl)" />
        <circle cx="25" cy="12.500" r="9.800" fill="#c42b1c" /><text x="25" y="17" text-anchor="middle" fill="#fff" font-size="13">1</text>
      </svg>
      <div class="wx"><div><span v-fit="31" class="t">27°C</span></div><div class="pc"><span v-fit="87" class="t">Partly cloudy</span></div></div>
      <svg class="start" width="29" height="29" viewBox="0 0 29 29">
        <defs><linearGradient id="wn" x1="0" y1="0" x2="1" y2="1"><stop offset="0" stop-color="#4fd0fb" /><stop offset="1" stop-color="#0071cf" /></linearGradient></defs>
        <path d="M1 0H14V14H0V1ZM15 0H28L29 1V14H15ZM0 15H14V29H1L0 28ZM15 15H29V28L28 29H15Z" fill="url(#wn)" />
      </svg>
      <div class="search">
        <svg width="19" height="19" viewBox="0 0 19 19" fill="none" stroke="#222" stroke-width="1.900"><circle cx="8" cy="7.800" r="6.300" /><path d="M12.500 12.500L17.500 17.800" /></svg>
        <span v-fit="51" class="t">Search</span>
        <svg class="gear2" width="54" height="30" viewBox="0 0 54 30">
          <path d="M15 3Q18 0 21 2Q23 4 21 7L8 26Q4 30 1.500 28Q-.5 26 2 22Z" fill="#ec4fa0" /><path d="M13 8L18 11L13 18L7 15Z" fill="#f5c935" /><path d="M17 4L20 6L16 11L13 9Z" fill="#e2223c" /><circle cx="8" cy="19" r="4" fill="#0e9a55" />
          <path d="M30 6L23 9L20 15L15 27L18 28L24 19L31 16Z" fill="#55566e" /><path d="M44 6L50 13L53 25L48 24Z" fill="#8a8a9c" />
          <path d="M31 3L38 0L46 3L48 12L46 23L41 24L38 22L36 24L31 22L30 12Z" fill="#e0381d" /><path d="M34 0Q39 -1 43 0L40 5H37ZM37 5H40V23H37ZM30 21L36 23V25L31 24ZM41 23L47 21L46 24Z" fill="#3f3b46" />
        </svg>
      </div>
      <div v-for="(a, i) in dock" :key="i" class="app" :class="{ live: a.name === 'tableau' }" :style="{ width: a.w + 'px', marginLeft: a.gap + 'px' }">
        <svg width="36" height="36" viewBox="0 0 36 36">
          <g v-if="a.name === 'view'"><rect x="3" y="11" width="22" height="21" rx="1" fill="#2e2e2e" /><rect x="10" y="4" width="23" height="20" rx="1" fill="#fff" opacity=".85" /><rect x="10" y="11" width="15" height="13" fill="#aaa9a6" /></g>
          <g v-else-if="a.name === 'chat'">
            <defs><linearGradient id="ch" x1="0" y1="1" x2="1" y2="0"><stop offset=".3" stop-color="#5156be" /><stop offset=".7" stop-color="#7b78cf" /><stop offset="1" stop-color="#a593d8" /></linearGradient></defs>
            <path d="M18 4A14 14 0 1 1 13 31L5 32.500L6.500 26A14 14 0 0 1 18 4Z" fill="url(#ch)" /><rect x="10" y="12" width="12" height="12" rx="2" fill="#fff" /><path d="M23 16.500L27 13V23L23 19.500Z" fill="#fff" />
          </g>
          <g v-else-if="a.name === 'files'"><path d="M3 6Q3 5 4 5H12L15 8H32V14H3Z" fill="#dd9f0c" /><rect x="3" y="10" width="30" height="21" rx="1.500" fill="#ffcf4b" /><path d="M8 31V26Q8 24 10 24H26Q28 24 28 26V31Z" fill="#1279cc" /><path d="M13 28H23" stroke="#0b4c94" stroke-width="1.500" /></g>
          <g v-else-if="a.name === 'ma'">
            <defs><linearGradient id="ma" x1="0" y1="1" x2="1" y2="0"><stop offset="0" stop-color="#5a1af5" /><stop offset=".6" stop-color="#1367fb" /><stop offset="1" stop-color="#1db2fb" /></linearGradient></defs>
            <rect x="3" y="3" width="30" height="30" fill="url(#ma)" /><path d="M7 25L13 13M13 25L19 13M19 25L26 12V19" fill="none" stroke="#fff" stroke-width="2.600" /><circle cx="25.300" cy="23.500" r="1.800" fill="#fff" />
          </g>
          <g v-else-if="a.name === 'edge'">
            <defs><linearGradient id="ed" x1="0" y1="0" x2="1" y2=".4"><stop offset="0" stop-color="#22a5e8" /><stop offset=".6" stop-color="#2cc4c8" /><stop offset="1" stop-color="#6ddc53" /></linearGradient></defs>
            <circle cx="18" cy="18" r="15" fill="#0f71c6" /><path d="M3.500 15Q6 3 18 3Q33 4 33 17Q32 23 25 23Q20 23 21 19Q22 14 16 13Q8 12 3.500 19Z" fill="url(#ed)" /><path d="M14 17Q10 29 22 32Q28 32 31 26Q25 29 20 26Q16 23 18.500 17Q17 14 14 17Z" fill="#0c4f9c" /><path d="M21 19Q20 23 25 23.500Q30 23 32.500 20L31.500 25Q25 28 20.500 25Q17.500 22 19 17.500Z" fill="#e4ded8" />
          </g>
          <g v-else-if="a.name === 'store'">
            <defs><linearGradient id="st" x1="0" y1="0" x2="0" y2="1"><stop offset="0" stop-color="#0b6bbb" /><stop offset="1" stop-color="#233a61" /></linearGradient></defs>
            <path d="M12 9V5.500Q12 4.500 13 4.500H24Q25 4.500 25 5.500V9" fill="none" stroke="#31bdf3" stroke-width="2" /><path d="M4 8H33V29Q33 33 29 33H8Q4 33 4 29Z" fill="url(#st)" /><path d="M12.500 15H18V20H12.500Z" fill="#f25022" /><path d="M19 15H24.500V20H19Z" fill="#7fba00" /><path d="M12.500 21H18V26H12.500Z" fill="#00a4ef" /><path d="M19 21H24.500V26H19Z" fill="#ffb900" />
          </g>
          <g v-else-if="a.name === 'armoury'"><path d="M18 3L31 10V25L18 33L5 25V10Z" fill="#6c7177" /><path d="M18 3L5 10V25L9 23Z" fill="#94989d" /><path d="M18 3L31 10V25L28 24Z" fill="#3e4247" /><path d="M19 9L28 24L9 23Z" fill="#212428" /><path d="M5 25L18 33L31 25L28 24L9 23Z" fill="#7b8086" /></g>
          <g v-else-if="a.name === 'xbox'"><rect x="3" y="3" width="30" height="30" rx="2.500" fill="#107c10" /><circle cx="18" cy="18" r="12.200" fill="#fff" /><path d="M9 9Q13 8 18 12Q23 8 27 9Q23 4 18 5.500Q13 4 9 9ZM18 15Q10 20 8.500 26L11 29Q13 22 18 18.500Q23 22 25 29L27.500 26Q26 20 18 15ZM9 9L7 10.500Q12 12 16 16L18 14.500L20 16Q24 12 29 10.500L27 9Q22 10 18 13.500Q14 10 9 9Z" fill="#107c10" /></g>
          <g v-else-if="a.name === 'chrome'">
            <path d="M18 18L5 10.500A15 15 0 0 1 31 10.500Z" fill="#dd4335" /><path d="M18 18L5 10.500A15 15 0 0 0 18 33L25 22Z" fill="#2d9648" /><path d="M18 18H25L18 33A15 15 0 0 0 31 10.500H18Z" fill="#fcc31d" /><circle cx="18" cy="18" r="7.200" fill="#fff" /><circle cx="18" cy="18" r="5.600" fill="#3478ea" />
          </g>
          <g v-else-if="a.name === 'insta'">
            <defs><linearGradient id="ig" x1="0" y1="1" x2=".7" y2="0"><stop offset="0" stop-color="#fdc04b" /><stop offset=".35" stop-color="#f5553c" /><stop offset=".65" stop-color="#d42f86" /><stop offset="1" stop-color="#6246cd" /></linearGradient></defs>
            <rect x="3" y="3" width="30" height="30" rx="3" fill="url(#ig)" /><rect x="8.500" y="8.500" width="19" height="19" rx="5" fill="none" stroke="#fff" stroke-width="2.200" /><circle cx="18" cy="18" r="4.600" fill="none" stroke="#fff" stroke-width="2.200" /><circle cx="23.500" cy="12.500" r="1.300" fill="#fff" />
          </g>
          <g v-else-if="a.name === 'firefox'">
            <defs><linearGradient id="ff" x1="1" y1="0" x2=".3" y2="1"><stop offset="0" stop-color="#ffe14a" /><stop offset=".45" stop-color="#ff8a26" /><stop offset="1" stop-color="#f22562" /></linearGradient></defs>
            <path d="M7 9L9 12L13 9L14 12L19 12Q20 5 23 3Q24 8 28 11Q31 15 31.500 20Q30 32 18 33Q6 32 4.500 20Q5 13 7 9Z" fill="url(#ff)" /><circle cx="19" cy="19" r="6" fill="#7a3fe0" /><path d="M11 15Q15 14 19 16Q17 18 14 18Q16 24 22 23Q18 28 12 24Q9 20 11 15Z" fill="#ff8a26" />
          </g>
          <g v-else-if="a.name === 'gear'"><g fill="#69737e"><circle cx="18" cy="18" r="11.500" /><rect v-for="k in 4" :key="k" x="14.500" y="3.500" width="7" height="29" rx="1.500" :transform="`rotate(${k * 45} 18 18)`" /></g><circle cx="18" cy="18" r="7" fill="#e8ebee" /><circle cx="18" cy="18" r="5.600" fill="#0d61ab" /></g>
          <g v-else-if="a.name === 'note'"><rect x="7" y="5" width="22" height="26" rx="1.500" fill="#45bfe4" /><path d="M7 32H29" stroke="#a35a14" stroke-width="2.200" /><path d="M11 13H25M11 18H25M11 23H25" stroke="#0c627f" stroke-width="1.700" /><path d="M10 3V7M15.300 3V7M20.600 3V7M26 3V7" stroke="#0c6a88" stroke-width="2" /></g>
          <g v-else-if="a.name === 'opera'" fill="none" stroke="#fa2d5c"><circle cx="18" cy="18" r="14.200" stroke-width="1.700" /><ellipse cx="18" cy="18" rx="7" ry="13.800" stroke-width="1.700" /><path d="M19 6Q26 8 26 18T19 30" stroke-width="1.500" /></g>
          <g v-else-if="a.name === 'tableau'"><rect x="4" y="3" width="28" height="30" fill="#f7f8f9" stroke="#ccd" stroke-width=".5" /><path v-for="(s, k) in sparks" :key="k" :d="`M${4 + s[0] * 1.4 - s[2] * 1.25} ${4 + s[1] * 1.4}h${s[2] * 2.5}M${4 + s[0] * 1.4} ${4 + s[1] * 1.4 - s[2] * 1.25}v${s[2] * 2.5}`" stroke="#2b78a8" stroke-width="1.500" /></g>
        </svg>
        <i v-if="a.pic" class="pic" :class="a.pic"></i>
        <i v-if="a.dot" class="dot"></i>
        <i v-if="a.name === 'tableau'" class="dot blue"></i>
      </div>
      <svg class="up" width="14" height="9" viewBox="0 0 14 9"><path d="M1 8L7 2L13 8" fill="none" stroke="#222" stroke-width="1.600" /></svg>
      <div class="lang"><div><span v-fit="29" class="t">ENG</span></div><div><span v-fit="15" class="t">IN</span></div></div>
      <svg class="tray" width="82" height="22" viewBox="0 0 82 22" fill="none" stroke="#222" stroke-width="1.400">
        <path d="M1 8.500Q10.500 -.5 20 8.500M4 11.800Q10.500 5.500 17 11.800M7 15Q10.500 11.500 14 15" /><circle cx="10.500" cy="17" r="1.700" fill="#222" />
        <path d="M31 8.500H34.500L39 4.500V18L34.500 14H31ZM42 8Q44 11 42 14.500M45 6Q48.500 11 45 16.500M47.500 3.500Q52.500 11 47.500 18.500" />
        <rect x="62" y="6.500" width="15" height="10.500" rx="2" /><rect x="63.500" y="8" width="12" height="7.500" fill="#222" stroke="none" /><path d="M79 10V14" stroke-width="2.200" /><path d="M64.500 0L59 8H62.500L61 14L68 6H64Z" fill="#222" stroke="#ddd" stroke-width=".7" />
      </svg>
      <div class="clock"><div><span v-fit="36" class="t">21:34</span></div><div><span v-fit="78" class="t">21-10-2023</span></div></div>
      <div class="badge">6</div>
    </footer>
  </div>
</template>

<style>
body { margin: 0; overflow: hidden; }
</style>

<style scoped>
.screen { width: 1920px; height: 1080px; display: flex; flex-direction: column; background: #f4f4f4; font-family: "Open Sans", "Noto Sans", sans-serif; color: #333; overflow: hidden; }
.t { display: inline-block; white-space: nowrap; }
b { font-weight: 600; }
i { font-style: normal; }
.title { height: 29px; flex: none; display: flex; align-items: center; padding-left: 3px; box-sizing: border-box; font-family: "Noto Sans", sans-serif; font-size: 14px; color: #111; background: linear-gradient(90deg, #f3f3f3 0, #f4f2f2 5%, #faeeed 14%, #faefec 26%, #faf1e7 40%, #f5f2e6 55%, #f3f3ef 68%, #faf0ec 82%, #faefec 100%); }
.appicon { width: 17px; height: 17px; background: #eef2f5; border: 1px solid #d5dadd; box-sizing: border-box; margin-right: 8px; }
.winctl { width: 150px; height: 28px; margin-left: auto; margin-right: 26px; margin-top: -1px; }
.menu { height: 25px; flex: none; background: #fff; display: flex; gap: 16.600px; padding-left: 8px; align-items: center; font-family: "Noto Sans", sans-serif; font-size: 14px; color: #111; border-bottom: 1px solid #efefef; box-sizing: border-box; padding-top: 3px; }
.mi { flex: none; }
.toolbar { height: 51px; flex: none; display: flex; align-items: center; background: #f4f4f4; padding-bottom: 1px; box-sizing: border-box; }
.tool { flex: none; height: 35px; display: flex; align-items: center; justify-content: center; }
.vsep { width: 1px; height: 35px; background: #cfcfcf; }
.caret { display: block; border: 3.500px solid transparent; border-top: 4px solid #555; border-bottom: 0; width: 0; height: 0; }
.caret.off { border-top-color: #bdbdbd; }
.caret.big { border-width: 4.500px 4.500px 0; border-top-color: #111; }
.tselect { width: 125px; height: 26px; border: 1px solid #cdcdcd; border-radius: 2px; display: flex; align-items: center; justify-content: flex-end; }
.tselect .caret { margin-right: 7px; }
.showme { margin-left: auto; margin-right: 30px; margin-top: -2px; display: flex; align-items: center; gap: 6px; color: #8a8a8a; font-size: 16px; }
.work { height: 852px; flex: none; display: flex; }
.side { width: 261px; border-right: 1px solid #cacaca; background: #fafafa; display: flex; flex-direction: column; font-size: 16px; color: #3a3a3a; }
.stabs { display: flex; height: 33px; flex: none; line-height: 22px; }
.stab { box-sizing: border-box; border-top: 1px solid #cacaca; }
.stab.on { width: 117px; padding: 4px 0 0 22px; color: #111; }
.stab.lay { flex: 1; border-left: 1px solid #cacaca; border-bottom: 1px solid #cacaca; padding: 5px 7px 0 15px; display: flex; justify-content: space-between; font-size: 16.500px; }
.stab.lay svg { margin-top: 4px; }
.newpt { padding: 20px 22px 0; height: 77px; border-bottom: 1px solid #cacaca; line-height: 24px; color: #222; }
.btns { display: flex; gap: 15px; margin-top: 14px; }
button { width: 101px; height: 23px; padding: 0; border: 1px solid #c6c6c6; border-radius: 2px; background: #fff; font: 14.500px "Open Sans", sans-serif; line-height: 20px; color: #444; }
.list { list-style: none; margin: 23px 0 0; padding: 0; height: 439px; flex: none; border-bottom: 1px solid #cacaca; }
.list li { height: 32px; padding-left: 22px; display: flex; align-items: center; gap: 7px; font-size: 16.500px; }
.list li.hot { background: #f3f3f3; }
.list svg { margin-top: 2px; }
.list .t { margin-top: -2px; }
.drag { height: 85px; flex: none; border-bottom: 1px solid #cacaca; padding: 17px 0 0 23px; box-sizing: border-box; display: flex; font-size: 15px; line-height: 22px; }
.aglyph { width: 23px; color: #666; font-size: 16px; }
.show { height: 56px; flex: none; border-bottom: 1px solid #cacaca; padding-left: 22px; box-sizing: border-box; display: flex; align-items: center; gap: 6px; font-size: 15px; }
.size { padding: 21px 22px 0; line-height: 24px; color: #222; }
.gen { display: flex; align-items: center; height: 26px; margin-top: 13px; border-bottom: 1px solid #c2c2c2; font-size: 15px; color: #3a3a3a; padding-left: 1px; width: 216px; justify-content: space-between; }
.canvas { width: 1366px; height: 768px; background: #fff; }
h1 { margin: 0; font-weight: 400; font-size: 28.500px; line-height: 38px; padding: 10px 0 0 12px; height: 50px; box-sizing: border-box; color: #383838; }
.nav { display: flex; align-items: center; padding-left: 355px; margin-top: 11px; height: 70px; }
.nav svg { margin-top: -2px; }
.pts { display: flex; gap: 2px; margin: 0 10px 0 10px; }
.pt { width: 150px; height: 70px; box-sizing: border-box; padding: 9.500px 0 0 10px; background: #ededed; color: #8b8b8b; font-size: 15px; line-height: 22px; }
.pt.on { background: #dadada; color: #111; }
.body { display: flex; margin: 28px 0 0 16px; }
.map { position: relative; width: 1172px; height: 591px; border: 1px solid #e2e2e2; box-sizing: content-box; flex: none; }
.map > svg { display: block; }
.soft { opacity: .75; filter: blur(10px); }
.prov { fill: none; stroke: #b0b0b0; stroke-width: 1px; vector-effect: non-scaling-stroke; }
.halo { fill: none; stroke: #f4f4f4; stroke-width: 4px; vector-effect: non-scaling-stroke; }
.line { fill: none; stroke: #9c9c9c; stroke-width: 1.200px; vector-effect: non-scaling-stroke; }
.state { stroke: #77706a; stroke-width: 1.100px; vector-effect: non-scaling-stroke; }
.lab { font: bold 14.500px "Noto Sans", sans-serif; fill: #000; }
.country { font: 16px "Noto Sans", sans-serif; fill: #909090; stroke: #f3f3f3; stroke-width: 2px; paint-order: stroke; }
.india { font: 16px "Noto Sans", sans-serif; fill: #9c3f40; opacity: .75; }
.attr { position: absolute; left: 2px; bottom: 1px; width: 207px; height: 17px; background: rgba(255, 255, 255, .75); font: 12.500px/17px "Liberation Sans", sans-serif; color: #444; padding-left: 3px; box-sizing: border-box; }
.unknown { position: absolute; right: 5px; bottom: 5px; width: 106px; height: 25px; border-radius: 2px; background: rgba(150, 150, 150, .72); color: #fff; text-align: center; font-size: 16px; line-height: 25px; }
.unknown b { font-weight: 700; }
.legend { width: 150px; padding-left: 4px; font-size: 15px; }
.lh { line-height: 22px; height: 22px; margin-top: 3px; color: #333; font-weight: 400; font-family: "Noto Sans", sans-serif; }
.lsel { height: 22px; margin: 4px 0 0 4px; border: 1px solid #c4c4c4; border-radius: 2px; display: flex; justify-content: space-between; align-items: center; padding-left: 3px; width: 139px; font-size: 14px; color: #555; }
.lsel em { width: 21px; height: 22px; border-left: 1px solid #cfcfcf; display: flex; align-items: center; justify-content: center; }
.lh.area { margin-top: 11px; }
.ramp { display: flex; width: 142px; height: 13px; border: 1px solid #a99d88; margin: 5px 0 0 4px; }
.ramp i { flex: 1; }
.lims { display: flex; justify-content: space-between; width: 143px; margin: 1px 0 0 4px; line-height: 20px; color: #555; }
.tabs { height: 38px; flex: none; display: flex; box-sizing: border-box; border-top: 1px solid #c6c6c6; border-bottom: 1px solid #cccccc; background: #e5e5e5; font-size: 15px; color: #555; line-height: 34px; }
.tab { flex: none; box-sizing: border-box; border-right: 1px solid #c8c8c8; padding-left: 6px; height: 36px; display: flex; align-items: center; overflow: hidden; }
.ds { width: 163px; padding-left: 10px; gap: 6px; }
.ds svg { margin-top: -2px; }
.cut { width: 173px; justify-content: flex-end; padding-right: 18px; padding-left: 0; }
.withicon { padding-left: 8px; gap: 4px; }
.withicon svg, .act svg { margin-top: -2px; flex: none; }
.act { width: 81px; background: #fafafa; padding-left: 8px; gap: 5px; }
.add { width: 32px; padding-left: 10px; padding-top: 1px; }
.status { height: 25px; flex: none; display: flex; justify-content: flex-end; background: #eaeaea; }
.status > div { box-sizing: border-box; border-left: 1px solid #c8c8c8; height: 25px; display: flex; align-items: center; padding-bottom: 2px; }
.status > .user { width: 157px; padding-left: 6px; font: 13.500px "Noto Sans", sans-serif; color: #111; }
.user .t { margin-left: 9px; }
.user .caret { margin-left: 37px; }
.c32 { width: 32px; }
.c57 { width: 57px; }
.pager { width: 71px; padding-left: 4px; overflow: hidden; }
.views { width: 70px; padding-left: 7px; }
.taskbar { height: 60px; flex: none; box-sizing: border-box; border-top: 1px solid #b9b2a9; padding-bottom: 1px; display: flex; align-items: center; font-family: "Noto Sans", sans-serif; font-size: 14px; color: #222; background: linear-gradient(90deg, #f1e6c8 0, #f5e6cb 12%, #f4e6cb 26%, #f3e7cb 37%, #e6dfd3 41%, #e3dfd6 48%, #efdbd0 54%, #ecd5d5 60%, #ead8d3 64%, #dddbd4 68%, #dadada 73%, #ead7d3 77%, #ecd6d3 83%, #ddd9d7 88%, #d8d8d8 100%); }
.weather { margin-left: 24px; margin-top: -8px; flex: none; }
.wx { margin-left: -2px; width: 90px; line-height: 20px; margin-top: -1px; }
.pc { color: #5c5648; }
.start { margin-left: 156px; flex: none; }
.search { flex: none; margin-left: 18px; width: 272px; height: 39px; box-sizing: border-box; border: 1px solid #e3d6be; border-radius: 20px; background: #fcf6ec; display: flex; align-items: center; padding: 0 6px 0 13px; color: #555; font-size: 15.500px; }
.search .t { margin-left: 12px; }
.gear2 { margin-left: auto; }
.app { position: relative; flex: none; height: 48px; display: flex; align-items: center; justify-content: center; }
.app.live { background: rgba(255, 255, 255, .5); border-radius: 4px; box-shadow: 0 0 1px #b8a8a5; }
.dot { position: absolute; bottom: 0; left: 50%; margin-left: -4px; width: 8px; height: 4px; border-radius: 2px; background: #85807c; }
.dot.blue { width: 20px; margin-left: -10px; background: #0c78d6; }
.pic { position: absolute; left: 19px; top: 3px; width: 20px; height: 20px; border-radius: 50%; }
.p1 { background: radial-gradient(ellipse at 50% 48%, #a37256 0 22%, transparent 24%), radial-gradient(circle at 50% 32%, #1e1c1c 0 26%, transparent 28%), radial-gradient(circle at 50% 105%, #6a7c84 0 35%, #7ba3c4 37%); }
.p2 { background: radial-gradient(circle at 82% 45%, #10151f 0 18%, transparent 30%), radial-gradient(circle at 40% 55%, #f2f5f3 0 25%, #a9b6b0 55%, #5e6f6a); }
.p3 { background: radial-gradient(circle at 45% 45%, #4d1f38 0 25%, transparent 35%), radial-gradient(circle at 35% 85%, #d2512a 0 15%, transparent 45%), #241333; }
.up { margin-left: 31px; flex: none; }
.lang { width: 50px; margin-left: 16px; text-align: center; line-height: 20px; }
.tray { margin-left: 11px; flex: none; margin-top: -2px; }
.clock { width: 90px; margin-left: 7px; text-align: right; line-height: 20px; }
.badge { width: 20px; height: 20px; border-radius: 50%; background: #0a78d4; color: #fff; font-size: 12px; line-height: 20px; text-align: center; margin-left: 9px; }
</style>
